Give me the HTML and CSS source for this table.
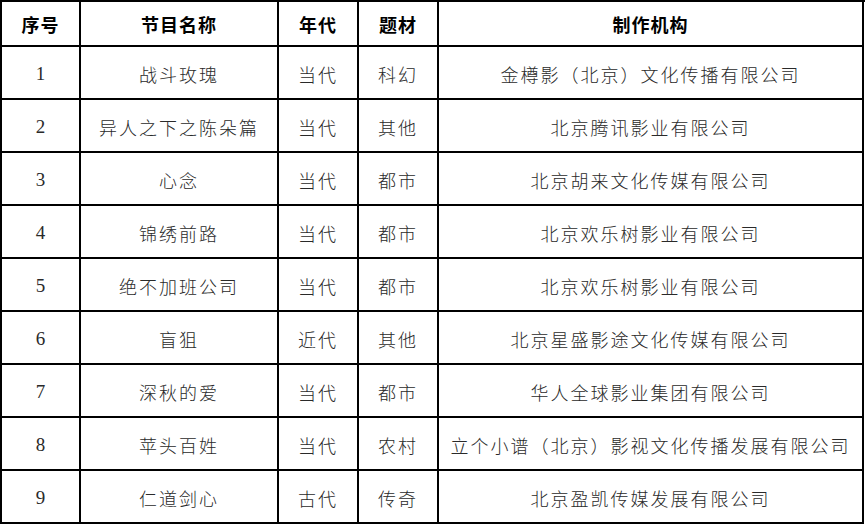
FILE: index.html
```html
<!DOCTYPE html>
<html lang="zh-CN">
<head>
<meta charset="utf-8">
<title>节目列表</title>
<link rel="stylesheet" href="styles.css">
</head>
<body>
<div class="table">
  <div class="cell head">序号</div>
  <div class="cell head">节目名称</div>
  <div class="cell head">年代</div>
  <div class="cell head">题材</div>
  <div class="cell head">制作机构</div>

  <div class="cell num">1</div><div class="cell">战斗玫瑰</div><div class="cell">当代</div><div class="cell">科幻</div><div class="cell">金樽影（北京）文化传播有限公司</div>
  <div class="cell num">2</div><div class="cell">异人之下之陈朵篇</div><div class="cell">当代</div><div class="cell">其他</div><div class="cell">北京腾讯影业有限公司</div>
  <div class="cell num">3</div><div class="cell">心念</div><div class="cell">当代</div><div class="cell">都市</div><div class="cell">北京胡来文化传媒有限公司</div>
  <div class="cell num">4</div><div class="cell">锦绣前路</div><div class="cell">当代</div><div class="cell">都市</div><div class="cell">北京欢乐树影业有限公司</div>
  <div class="cell num">5</div><div class="cell">绝不加班公司</div><div class="cell">当代</div><div class="cell">都市</div><div class="cell">北京欢乐树影业有限公司</div>
  <div class="cell num">6</div><div class="cell">盲狙</div><div class="cell">近代</div><div class="cell">其他</div><div class="cell">北京星盛影途文化传媒有限公司</div>
  <div class="cell num">7</div><div class="cell">深秋的爱</div><div class="cell">当代</div><div class="cell">都市</div><div class="cell">华人全球影业集团有限公司</div>
  <div class="cell num">8</div><div class="cell">苹头百姓</div><div class="cell">当代</div><div class="cell">农村</div><div class="cell">立个小谱（北京）影视文化传播发展有限公司</div>
  <div class="cell num">9</div><div class="cell">仁道剑心</div><div class="cell">古代</div><div class="cell">传奇</div><div class="cell">北京盈凯传媒发展有限公司</div>
</div>
</body>
</html>
```

FILE: styles.css
```css
html, body {
  margin: 0;
  padding: 0;
  background: #ffffff;
}

.table {
  display: grid;
  grid-template-columns: 79px 198px 80px 80px 425px;
  grid-template-rows: 45px repeat(9, 53px);
  width: 864px;
  border-left: 2px solid #000;
  border-top: 2px solid #000;
  font-family: "Liberation Serif", "Noto Sans CJK SC", serif;
}

.cell {
  box-sizing: border-box;
  border-right: 2px solid #000;
  border-bottom: 2px solid #000;
  display: flex;
  align-items: center;
  justify-content: center;
  padding-top: 2px;
  font-size: 18px;
  font-weight: 300;
  letter-spacing: 2px;
  color: #2a2a2a;
  white-space: nowrap;
}

.head {
  font-family: "Noto Sans CJK SC", sans-serif;
  font-weight: 700;
  color: #000;
  letter-spacing: 1px;
  padding-top: 0;
}

.num {
  letter-spacing: 0;
  font-size: 19px;
}
```
